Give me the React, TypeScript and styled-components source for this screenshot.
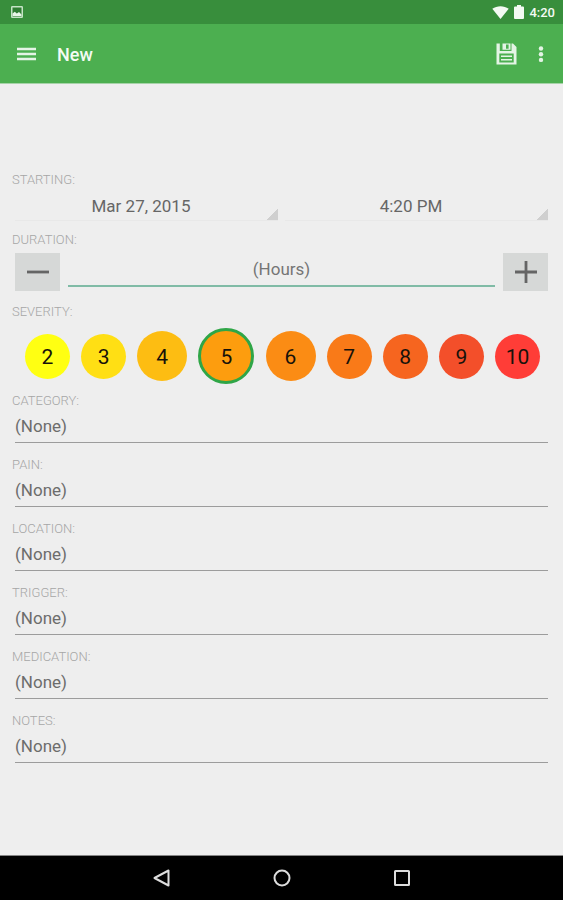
import React, { useState } from "react";
import styled, { createGlobalStyle } from "styled-components";

const GlobalStyle = createGlobalStyle`
  *, *::before, *::after { box-sizing: border-box; }
  body { margin: 0; background: #eeeeee; }
  body, button, input, select { font-family: Roboto, "Liberation Sans", sans-serif; }
  button { border: 0; padding: 0; background: none; cursor: pointer; }
`;

const Screen = styled.div`
  min-height: 100vh;
  display: flex;
  flex-direction: column;
  background: #eeeeee;
`;

const StatusBar = styled.div`
  height: 24px;
  padding: 0 8px 0 11px;
  display: flex;
  align-items: center;
  justify-content: space-between;
  background: #388e3c;
  color: #f3faf3;
`;

const StatusGroup = styled.div`
  display: flex;
  align-items: center;
  gap: 5px;
`;

const Clock = styled.span`
  padding-top: 1px;
  font-size: 13px;
  font-weight: 500;
  line-height: 16px;
`;

const Toolbar = styled.header`
  height: 60px;
  padding: 0 12px 0 16px;
  display: flex;
  align-items: center;
  background: #4caf50;
  border-bottom: 1px solid #a6d3a8;
`;

const IconButton = styled.button`
  display: flex;
  align-items: center;
  justify-content: center;
  color: #e4f4e5;
`;

const Title = styled.h1`
  flex: 1;
  margin: 0 0 0 20px;
  padding-top: 3px;
  font-size: 18px;
  font-weight: 500;
  line-height: 24px;
  color: #f4fbf4;
`;

const ToolbarActions = styled.div`
  display: flex;
  align-items: center;
  gap: 14px;
`;

const Form = styled.form`
  flex: 1;
  padding: 88px 15px 24px 12px;
`;

const Caption = styled.label`
  display: block;
  width: fit-content;
  font-size: 13px;
  font-weight: 300;
  line-height: 16px;
  color: #a6a6a6;
`;

const Group = styled.section`
  margin-bottom: 11px;
`;

const SpinnerRow = styled.div`
  display: grid;
  grid-template-columns: 1fr 1fr;
  gap: 7px;
  padding-left: 3px;
`;

const SpinnerBox = styled.div`
  position: relative;
  height: 33px;
  border-bottom: 1px solid #e8e8e8;

  &::after {
    content: "";
    position: absolute;
    right: 0;
    bottom: 0;
    width: 11px;
    height: 11px;
    background: linear-gradient(135deg, transparent 50%, #cfcfcf 50%);
    pointer-events: none;
  }
`;

const Spinner = styled.select`
  appearance: none;
  width: 100%;
  height: 100%;
  padding: 4px 11px 0 0;
  border: 0;
  background: transparent;
  font-size: 17px;
  text-align: center;
  text-align-last: center;
  color: #666666;
`;

const Stepper = styled.div`
  display: flex;
  gap: 8px;
  margin-top: 5px;
  padding-left: 3px;
`;

const StepButton = styled.button`
  width: 45px;
  height: 38px;
  display: flex;
  align-items: center;
  justify-content: center;
  background: #d6d8d7;
  color: #656565;
`;

const Hours = styled.input`
  flex: 1;
  min-width: 0;
  height: 34px;
  padding: 0;
  border: 0;
  border-bottom: 2px solid #80bba6;
  outline: 0;
  background: transparent;
  font-size: 17px;
  text-align: center;
  color: #666666;

  &::placeholder { color: #757575; opacity: 1; }
`;

const SeverityGroup = styled(Group)`
  margin-top: 13px;
  margin-bottom: 9px;
`;

const SeverityRow = styled.div`
  height: 56px;
  margin-top: 8px;
  padding: 0 8px 0 13px;
  display: flex;
  align-items: center;
  justify-content: space-between;
`;

const Dot = styled.label<{ $size: number; $fill: string; $selected: boolean }>`
  position: relative;
  flex: none;
  width: ${(p) => p.$size}px;
  height: ${(p) => p.$size}px;
  padding-top: 2px;
  display: flex;
  align-items: center;
  justify-content: center;
  border: ${(p) => (p.$selected ? "3px solid #2fa647" : "0")};
  border-radius: 50%;
  background: ${(p) => p.$fill};
  font-size: 21px;
  color: #17120a;
  cursor: pointer;
`;

const DotInput = styled.input`
  position: absolute;
  inset: 0;
  width: 100%;
  height: 100%;
  margin: 0;
  opacity: 0;
  cursor: pointer;
`;

const Field = styled.div`
  margin-bottom: 14px;
`;

const FieldInput = styled.input`
  display: block;
  width: calc(100% - 3px);
  height: 34px;
  margin-left: 3px;
  padding: 0;
  border: 0;
  border-bottom: 1px solid #9c9c9c;
  outline: 0;
  background: transparent;
  font-size: 17px;
  color: #666666;

  &::placeholder { color: #6c6c6c; opacity: 1; }
`;

const NavBar = styled.nav`
  height: 45px;
  display: flex;
  align-items: center;
  justify-content: center;
  gap: 96px;
  border-top: 1px solid #858585;
  background: #000000;
`;

const NavButton = styled.button`
  width: 24px;
  height: 24px;
  color: #dddddd;
`;

const LEVELS = [
  { value: 2, fill: "#ffff12" },
  { value: 3, fill: "#ffdf14" },
  { value: 4, fill: "#fdbd12" },
  { value: 5, fill: "#fd9d0e" },
  { value: 6, fill: "#fb8c14" },
  { value: 7, fill: "#f97a18" },
  { value: 8, fill: "#f6651f" },
  { value: 9, fill: "#f34f2a" },
  { value: 10, fill: "#ff3d37" },
];

const FIELDS = ["Category", "Pain", "Location", "Trigger", "Medication", "Notes"];

function dotSize(distance: number) {
  if (distance === 0) return 56;
  return distance === 1 ? 50 : 45;
}

function PictureIcon() {
  return (
    <svg width="12" height="12" viewBox="0 0 12 12" aria-hidden="true">
      <rect x="0.75" y="0.75" width="10.5" height="10.5" rx="0.5" fill="#2f7d33" stroke="#c5e4c6" strokeWidth="1.5" />
      <path d="M1.5 10V7.500L3.800 5.800 5.800 7.500 8 6l2.500 2.500V10z" fill="#e8f6e8" />
    </svg>
  );
}

function WifiIcon() {
  return (
    <svg width="17" height="13" viewBox="0 0 17 13" aria-hidden="true">
      <path d="M8.500 13L0.300 2.800C5-.6 12-.6 16.700 2.800z" fill="currentColor" />
    </svg>
  );
}

function BatteryIcon() {
  return (
    <svg width="10" height="14" viewBox="0 0 10 14" aria-hidden="true">
      <path d="M3 0h4v1.600h2q1 0 1 1V13q0 1-1 1H1q-1 0-1-1V2.600q0-1 1-1h2z" fill="currentColor" />
    </svg>
  );
}

function MenuIcon() {
  return (
    <svg width="21" height="14" viewBox="0 0 21 14" aria-hidden="true">
      <path d="M1 2h19M1 7h19M1 12h19" stroke="currentColor" strokeWidth="2.400" />
    </svg>
  );
}

function SaveIcon() {
  return (
    <svg width="21" height="22" viewBox="0 0 21 22" aria-hidden="true">
      <path
        fill="currentColor"
        fillRule="evenodd"
        d="M0.500 0.500H3.800V8H15.500V0.500H17L20.500 4V21.500H0.500zM3.300 10.500V19.500H17.700V10.500z"
      />
      <path d="M6.500 0.500H14.500V6.800H6.500zM10 1.500V5.800H12.600V1.500z" fill="currentColor" fillRule="evenodd" />
      <path d="M5 13.300h11M5 16.800h11" stroke="currentColor" strokeWidth="1.500" />
    </svg>
  );
}

function MoreIcon() {
  return (
    <svg width="20" height="20" viewBox="0 0 20 20" fill="currentColor" aria-hidden="true">
      <circle cx="10" cy="4.500" r="2.200" />
      <circle cx="10" cy="10.200" r="2.200" />
      <circle cx="10" cy="15.900" r="2.200" />
    </svg>
  );
}

function StepIcon({ plus = false }: { plus?: boolean }) {
  return (
    <svg width="24" height="24" viewBox="0 0 24 24" aria-hidden="true">
      <path d={plus ? "M1 12h22M12 1v22" : "M1 12h22"} stroke="currentColor" strokeWidth="2.800" />
    </svg>
  );
}

export default function App() {
  const [severity, setSeverity] = useState(5);
  const [hours, setHours] = useState("");
  const step = (amount: number) =>
    setHours((current) => String(Math.max(0, (Number(current) || 0) + amount)));

  return (
    <Screen>
      <GlobalStyle />
      <StatusBar>
        <PictureIcon />
        <StatusGroup>
          <WifiIcon />
          <BatteryIcon />
          <Clock>4:20</Clock>
        </StatusGroup>
      </StatusBar>
      <Toolbar>
        <IconButton type="button" aria-label="Open menu">
          <MenuIcon />
        </IconButton>
        <Title>New</Title>
        <ToolbarActions>
          <IconButton type="button" aria-label="Save">
            <SaveIcon />
          </IconButton>
          <IconButton type="button" aria-label="More options">
            <MoreIcon />
          </IconButton>
        </ToolbarActions>
      </Toolbar>

      <Form onSubmit={(event) => event.preventDefault()}>
        <Group>
          <Caption htmlFor="date">STARTING:</Caption>
          <SpinnerRow>
            <SpinnerBox>
              <Spinner id="date">
                <option>Mar 27, 2015</option>
              </Spinner>
            </SpinnerBox>
            <SpinnerBox>
              <Spinner aria-label="Starting time">
                <option>4:20 PM</option>
              </Spinner>
            </SpinnerBox>
          </SpinnerRow>
        </Group>

        <Group>
          <Caption htmlFor="hours">DURATION:</Caption>
          <Stepper>
            <StepButton type="button" aria-label="Decrease duration" onClick={() => step(-1)}>
              <StepIcon />
            </StepButton>
            <Hours
              id="hours"
              placeholder="(Hours)"
              value={hours}
              onChange={(event) => setHours(event.target.value)}
            />
            <StepButton type="button" aria-label="Increase duration" onClick={() => step(1)}>
              <StepIcon plus />
            </StepButton>
          </Stepper>
        </Group>

        <SeverityGroup>
          <Caption as="span" id="severity">SEVERITY:</Caption>
          <SeverityRow role="radiogroup" aria-labelledby="severity">
            {LEVELS.map(({ value, fill }) => (
              <Dot
                key={value}
                $size={dotSize(Math.abs(value - severity))}
                $fill={fill}
                $selected={value === severity}
              >
                <DotInput
                  type="radio"
                  name="severity"
                  value={value}
                  checked={value === severity}
                  onChange={() => setSeverity(value)}
                />
                {value}
              </Dot>
            ))}
          </SeverityRow>
        </SeverityGroup>

        {FIELDS.map((name) => (
          <Field key={name}>
            <Caption htmlFor={name}>{name.toUpperCase()}:</Caption>
            <FieldInput id={name} placeholder="(None)" />
          </Field>
        ))}
      </Form>

      <NavBar>
        <NavButton type="button" aria-label="Back">
          <svg width="24" height="24" viewBox="0 0 24 24" fill="none" aria-hidden="true">
            <path d="M18.500 4.500v15L4.500 12z" stroke="currentColor" strokeWidth="2" strokeLinejoin="round" />
          </svg>
        </NavButton>
        <NavButton type="button" aria-label="Home">
          <svg width="24" height="24" viewBox="0 0 24 24" fill="none" aria-hidden="true">
            <circle cx="12" cy="12" r="7.500" stroke="currentColor" strokeWidth="2" />
          </svg>
        </NavButton>
        <NavButton type="button" aria-label="Recent apps">
          <svg width="24" height="24" viewBox="0 0 24 24" fill="none" aria-hidden="true">
            <rect x="5" y="5" width="14" height="14" rx="0.500" stroke="currentColor" strokeWidth="2" />
          </svg>
        </NavButton>
      </NavBar>
    </Screen>
  );
}
